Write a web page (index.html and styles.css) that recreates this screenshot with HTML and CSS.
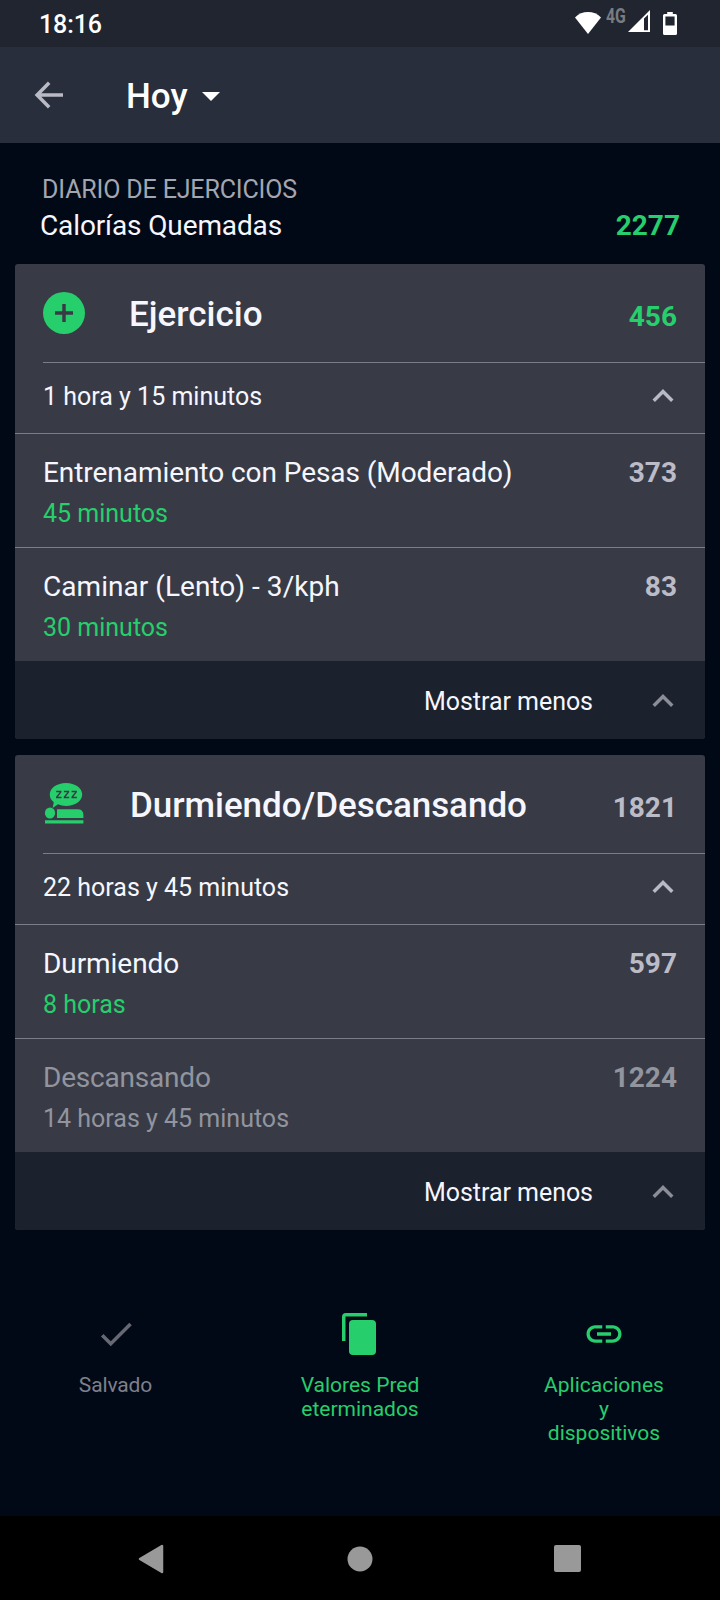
FILE: index.html
```html
<!DOCTYPE html>
<html lang="es">
<head>
<meta charset="utf-8">
<title>Diario de ejercicios</title>
<link rel="stylesheet" href="styles.css">
</head>
<body>
<svg class="defs" aria-hidden="true">
  <symbol id="chevron-up" viewBox="0 0 24 24"><path d="M12 8l-6 6 1.41 1.41L12 10.83l4.59 4.58L18 14z"/></symbol>
</svg>
<div class="screen">
  <div class="status-bar">
    <span class="clock">18:16</span>
    <div class="status-icons">
      <svg class="wifi" width="26" height="22" viewBox="0 0 26 22"><path d="M13 22L0 5.6C3.5 1.8 8 0 13 0s9.5 1.800 13 5.600z"/></svg>
      <span class="network">4G</span>
      <svg class="signal" width="22" height="22" viewBox="0 0 22 22"><path fill-rule="evenodd" d="M22 0v22H0zM16 8.500V20.300h4V4.700z"/></svg>
      <svg class="battery" width="14" height="23" viewBox="0 0 14 23"><path fill-rule="evenodd" d="M4.200 0h5.600v2H12.500Q14 2 14 3.500V21.500Q14 23 12.500 23h-11Q0 23 0 21.500V3.500Q0 2 1.500 2H4.200zM2.400 4.500V13.500h9.200V4.500z"/></svg>
    </div>
  </div>
  <header class="app-bar">
    <svg class="back" width="42" height="42" viewBox="0 0 24 24"><path d="M20 12H5.400M12.100 5L5.200 12l6.900 7"/></svg>
    <h1 class="day">Hoy</h1>
    <svg class="caret" width="18" height="9" viewBox="0 0 18 9"><path d="M0 0h18L9 9z"/></svg>
  </header>
  <main class="diary">
    <section class="summary">
      <div class="summary-title">DIARIO DE EJERCICIOS</div>
      <div class="summary-row"><span class="summary-label">Calorías Quemadas</span><span class="total">2277</span></div>
    </section>

    <section class="card">
      <div class="card-head">
        <svg class="head-icon" width="42" height="42" viewBox="0 0 42 42"><circle class="green-fill" cx="21" cy="21" r="21"/><path class="plus" d="M12 21h18M21 12v18"/></svg>
        <h2 class="card-title">Ejercicio</h2>
        <span class="num green">456</span>
      </div>
      <div class="duration"><span>1 hora y 15 minutos</span><svg class="chevron"><use href="#chevron-up"/></svg></div>
      <div class="entry">
        <div class="entry-main"><span class="name tight">Entrenamiento con Pesas (Moderado)</span><span class="num">373</span></div>
        <div class="time">45 minutos</div>
      </div>
      <div class="entry">
        <div class="entry-main"><span class="name loose">Caminar (Lento) - 3/kph</span><span class="num">83</span></div>
        <div class="time">30 minutos</div>
      </div>
      <div class="card-foot"><span>Mostrar menos</span><svg class="chevron dim"><use href="#chevron-up"/></svg></div>
    </section>

    <section class="card">
      <div class="card-head rest">
        <svg class="head-icon" width="42" height="42" viewBox="0 0 42 42">
          <g class="green-fill">
            <path d="M23 0C32 0 39.200 5 39.200 11.500S32 23 23 23Q18.500 23 15 21.300L9.600 25 10.800 19.300Q6.800 16 6.800 11.500C6.800 5 14 0 23 0z"/>
            <ellipse cx="7" cy="30" rx="5.100" ry="5.500"/>
            <path d="M14 26.200H34.500Q40.400 26.200 40.400 32V35H14z"/>
            <path d="M2 37.200h38.400v3.300H2z"/>
          </g>
          <path class="zzz" d="M13.200 8.500h4.500v.6l-3.900 4.900v.6h4.700M20.900 8.500h4.500v.6l-3.900 4.900v.6h4.700M28.600 8.500h4.500v.6l-3.900 4.900v.6h4.700"/>
        </svg>
        <h2 class="card-title">Durmiendo/Descansando</h2>
        <span class="num">1821</span>
      </div>
      <div class="duration"><span>22 horas y 45 minutos</span><svg class="chevron"><use href="#chevron-up"/></svg></div>
      <div class="entry">
        <div class="entry-main"><span class="name tight">Durmiendo</span><span class="num">597</span></div>
        <div class="time">8 horas</div>
      </div>
      <div class="entry muted">
        <div class="entry-main"><span class="name tighter">Descansando</span><span class="num">1224</span></div>
        <div class="time">14 horas y 45 minutos</div>
      </div>
      <div class="card-foot"><span>Mostrar menos</span><svg class="chevron dim"><use href="#chevron-up"/></svg></div>
    </section>
  </main>

  <nav class="actions">
    <div class="action saved">
      <svg width="42" height="42" viewBox="0 0 24 24"><path d="M9 16.170L4.830 12l-1.420 1.410L9 19 21 7l-1.410-1.410z"/></svg>
      <span>Salvado</span>
    </div>
    <div class="action">
      <svg class="copy" width="34" height="42" viewBox="0 0 34 42"><path d="M25 0v3.500H3.500V28H0V4Q0 0 4 0z"/><rect x="7" y="7" width="27" height="35" rx="4"/></svg>
      <span>Valores Pred<br>eterminados</span>
    </div>
    <div class="action">
      <svg width="42" height="42" viewBox="0 0 24 24"><path d="M3.900 12c0-1.710 1.390-3.100 3.100-3.100h4V7H7c-2.760 0-5 2.240-5 5s2.240 5 5 5h4v-1.900H7c-1.710 0-3.100-1.390-3.100-3.100zM8 13h8v-2H8v2zm9-6h-4v1.900h4c1.710 0 3.100 1.390 3.100 3.100s-1.390 3.100-3.100 3.100h-4V17h4c2.760 0 5-2.240 5-5s-2.240-5-5-5z"/></svg>
      <span>Aplicaciones<br>y<br>dispositivos</span>
    </div>
  </nav>

  <div class="system-nav">
    <svg width="26" height="30" viewBox="0 0 26 30"><path class="tri" d="M2 15L24 2v26z"/></svg>
    <svg width="28" height="26" viewBox="0 0 28 26"><circle cx="15" cy="13" r="12.500"/></svg>
    <svg width="27" height="27" viewBox="0 0 27 27"><rect width="27" height="27" rx="2"/></svg>
  </div>
</div>
</body>
</html>
```
FILE: styles.css
```css
* { box-sizing: border-box; }

body {
  margin: 0;
  background: #020916;
  font-family: Roboto, sans-serif;
  color: #f6f6ff;
}

h1, h2 { margin: 0; font-weight: 500; }
svg { display: block; flex: none; }
.defs { display: none; }

.screen {
  width: 720px;
  height: 1600px;
  display: flex;
  flex-direction: column;
  white-space: nowrap;
}

.status-bar {
  height: 47px;
  flex: none;
  padding: 0 43px 0 39px;
  background: #20252f;
  color: #fff;
  display: flex;
  justify-content: space-between;
}
.clock { font-size: 25px; font-weight: 500; line-height: 50px; letter-spacing: -0.1px; }
.status-icons { display: flex; align-items: flex-start; fill: #fff; }
.wifi { margin-top: 12px; }
.network {
  width: 20px;
  margin: 6px 2px 0 5px;
  font-size: 20px;
  font-weight: 700;
  line-height: 20px;
  color: #797c82;
  transform: scaleX(.79);
  transform-origin: left;
}
.signal { margin-top: 10px; }
.battery { margin: 12px 0 0 13px; }

.app-bar {
  height: 96px;
  flex: none;
  padding-left: 28px;
  background: #282e3b;
  color: #fff;
  display: flex;
  align-items: center;
}
.back { fill: none; stroke: #b9bac5; stroke-width: 2; }
.day { margin-left: 56px; font-size: 35px; line-height: 40px; padding-top: 4px; }
.caret { margin-left: 14px; margin-top: 2px; fill: #fff; }

.diary {
  padding: 31px 15px 0;
  display: flex;
  flex-direction: column;
}
.summary { height: 90px; padding: 0 25px; }
.summary-title { padding-left: 2px; font-size: 25px; line-height: 32px; letter-spacing: -0.15px; color: #a4a6af; }
.summary-row { display: flex; justify-content: space-between; font-size: 28px; line-height: 40px; }
.summary-label { letter-spacing: -0.12px; }
.total { color: #27ce6c; font-weight: 700; }

.card {
  border-radius: 3px;
  overflow: hidden;
  background: #383b46;
}
.card + .card { margin-top: 16px; }
.card-head {
  height: 99px;
  margin-left: 28px;
  padding-right: 28px;
  border-bottom: 1px solid #7b7e88;
  display: flex;
  align-items: center;
}
.card-title { margin-left: 44px; flex: 1; padding-top: 4px; font-size: 35px; line-height: 42px; }
.rest .card-title { margin-left: 45px; letter-spacing: -0.04px; }
.card-head .num { padding-top: 6px; }
.num { font-size: 28px; font-weight: 700; color: #bbbcc8; }
.num.green { color: #27ce6c; }
.green-fill { fill: #27ce6c; }
.plus { stroke: #383b46; stroke-width: 3.5; fill: none; }
.zzz { stroke: #383b46; stroke-width: 1.5; fill: none; }

.duration {
  height: 71px;
  padding: 0 21px 4px 28px;
  border-bottom: 1px solid #7b7e88;
  display: flex;
  align-items: center;
  justify-content: space-between;
  font-size: 25px;
}
.chevron { width: 42px; height: 42px; fill: #b9bac5; }
.chevron.dim { fill: #8b8e98; }

.entry { height: 113px; padding: 19px 28px 0; }
.entry + .entry { height: 114px; border-top: 1px solid #7b7e88; }
.entry-main {
  display: flex;
  justify-content: space-between;
  font-size: 28px;
  line-height: 40px;
}
.name.tight { letter-spacing: -0.06px; }
.name.tighter { letter-spacing: -0.2px; }
.name.loose { letter-spacing: 0.04px; }
.time { font-size: 25px; line-height: 42px; color: #27ce6c; }
.muted .name, .muted .time, .muted .num { color: #92949e; }

.card-foot {
  height: 78px;
  padding: 2px 21px 0 0;
  background: #1b212d;
  display: flex;
  align-items: center;
  justify-content: flex-end;
  gap: 49px;
  font-size: 25px;
  letter-spacing: -0.04px;
}

.actions {
  flex: 1;
  padding: 83px 38px 0;
  display: flex;
  justify-content: space-between;
}
.action {
  width: 156px;
  display: flex;
  flex-direction: column;
  align-items: center;
  gap: 18px;
  color: #27ce6c;
  fill: #27ce6c;
  font-size: 21px;
  line-height: 24px;
  text-align: center;
}
.saved { color: #7d808a; fill: #666974; }
.saved span { letter-spacing: -0.12px; margin-right: 1px; }
.copy { margin-right: 2px; }

.system-nav {
  height: 84px;
  flex: none;
  padding: 1px 139px 0 138px;
  background: #000;
  fill: #999;
  display: flex;
  align-items: center;
  justify-content: space-between;
}
.tri { stroke: #999; stroke-width: 2.5; stroke-linejoin: round; }
```
